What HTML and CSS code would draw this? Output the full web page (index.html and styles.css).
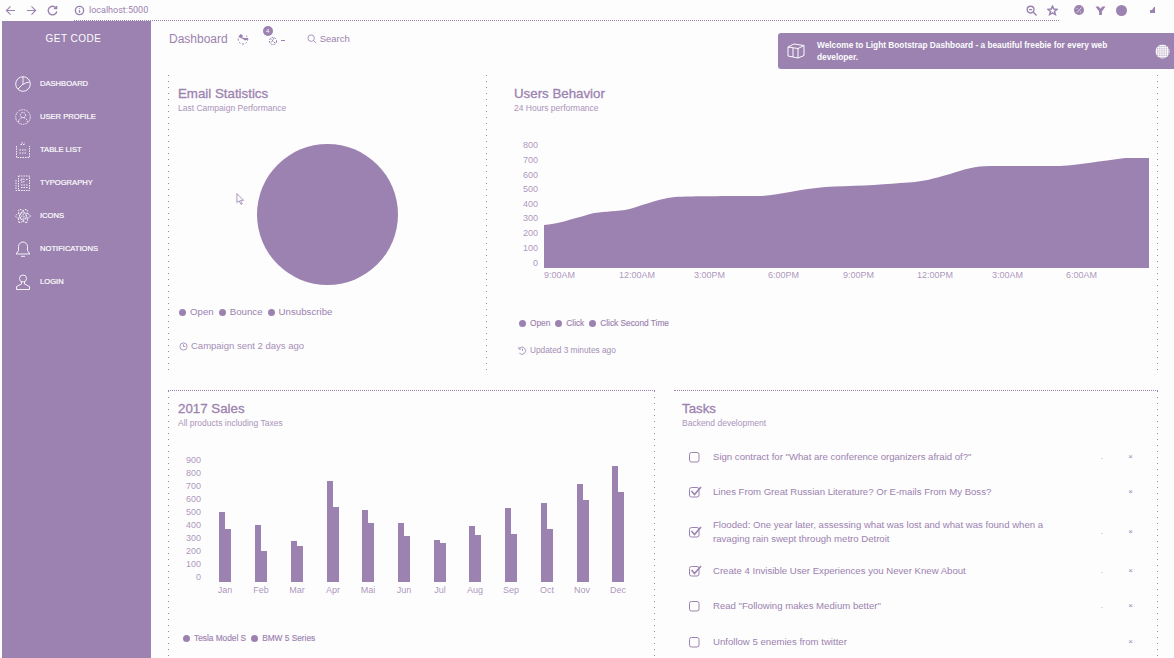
FILE: index.html
```html
<!DOCTYPE html>
<html lang="en">
<head>
    <meta charset="UTF-8">
    <title>Light Bootstrap Dashboard</title>
    <link rel="stylesheet" href="styles.css">
</head>
<body>
<svg class="defs" width="0" height="0">
    <symbol id="box-empty" viewBox="0 0 13 12"><rect x="0.5" y="1.5" width="9.5" height="9.5" rx="2" fill="none" stroke="currentColor"/></symbol>
    <symbol id="box-checked" viewBox="0 0 13 12"><rect x="0.5" y="1.5" width="9.5" height="9.5" rx="2" fill="none" stroke="currentColor"/><path d="M2.5 5l3 3.5L12 1" fill="none" stroke="currentColor" stroke-width="1.6"/></symbol>
</svg>

<div class="browser">
    <div class="browser-bar">
        <svg class="tool" viewBox="0 0 12 12"><path d="M11 6H1.5M6 1.5L1.5 6 6 10.5"/></svg>
        <svg class="tool" viewBox="0 0 12 12"><path d="M1 6h9.5M6 1.5L10.5 6 6 10.5"/></svg>
        <svg class="tool tool-thick" viewBox="0 0 12 12"><path d="M10 3.5A4.7 4.7 0 1 0 10.7 7M10.5 1v3h-3"/></svg>
        <svg class="tool tool-info tool-thick" viewBox="0 0 12 12"><circle cx="6" cy="6" r="4.5"/><path d="M6 5.5v3M6 3.2v1"/></svg>
        <span class="url">localhost:5000</span>
        <span class="browser-right">
            <svg class="tool tool-thick" viewBox="0 0 12 12"><circle cx="5" cy="5" r="3.7"/><path d="M3.3 5h3.4M8 8l3.5 3.5"/></svg>
            <svg class="tool tool-star" viewBox="0 0 12 12"><path d="M6 1.2l1.4 3.2 3.5.3-2.7 2.3.9 3.4L6 8.6l-3.1 1.8.9-3.4-2.7-2.3 3.500-.3z"/></svg>
            <svg class="ext-a" viewBox="0 0 10 10"><circle cx="5" cy="5" r="5"/><path class="ext-cut" d="M3 7.500L7.500 2.500M2.500 3.500h1M6 7h1"/></svg>
            <svg class="ext-v" viewBox="0 0 12 12"><path d="M.5 1.500h3.500L6 4l2-2.500h3.500L7.500 7v4h-3V7z"/></svg>
            <span class="ext-b"></span>
            <svg class="ext-tick" viewBox="0 0 5 6"><path d="M0 3h2l2-3h1v6H0z"/></svg>
        </span>
    </div>
    <div class="browser-rule"></div>
</div>

<div class="app">
    <aside class="sidebar">
        <div class="logo">GET CODE</div>
        <nav>
            <a class="nav-item">
                <svg class="nav-icon" viewBox="0 0 16 16"><circle cx="8" cy="8" r="7.3"/><path d="M8 .7V8L3 13M8 8.5l2.5-1.5 4 -1"/></svg>
                <span>Dashboard</span>
            </a>
            <a class="nav-item">
                <svg class="nav-icon nav-icon-dots" viewBox="0 0 16 16"><circle cx="8" cy="8" r="7.3"/><circle cx="8" cy="6" r="2.6"/><path d="M3.5 13c.5-3 2.5-4.500 4.500-4.500s4 1.500 4.500 4.500"/></svg>
                <span>User Profile</span>
            </a>
            <a class="nav-item">
                <svg class="nav-icon nav-icon-dots" viewBox="0 0 16 16"><path d="M5.500 2.500h5M6.500 1h3M1.500 4v11.500h13V4M4.500 8h7M4.500 11h7"/></svg>
                <span>Table List</span>
            </a>
            <a class="nav-item">
                <svg class="nav-icon nav-icon-dots" viewBox="0 0 16 16"><path d="M3.500 1h11v14.500h-11zM1 5v10.500h2.500M6 4h3v3H6zM11 4.500h1.500M6 10h6.500M6 12.500h6.500"/></svg>
                <span>Typography</span>
            </a>
            <a class="nav-item">
                <svg class="nav-icon nav-icon-dots" viewBox="0 0 16 16"><ellipse cx="8" cy="8" rx="7.300" ry="3"/><ellipse cx="8" cy="8" rx="7.300" ry="3" transform="rotate(60 8 8)"/><ellipse cx="8" cy="8" rx="7.300" ry="3" transform="rotate(120 8 8)"/><circle cx="8" cy="8" r="1.300"/></svg>
                <span>Icons</span>
            </a>
            <a class="nav-item">
                <svg class="nav-icon" viewBox="0 0 16 16"><path d="M8 1a4.500 4.500 0 0 0-4.500 4.500v4L1.200 13h13.600l-2.300-3.500v-4A4.500 4.500 0 0 0 8 1zM6 15.300h4"/></svg>
                <span>Notifications</span>
            </a>
            <a class="nav-item">
                <svg class="nav-icon" viewBox="0 0 16 16"><circle cx="8" cy="4.500" r="3.500"/><path d="M6.500 8v2L1.500 12.500v3h13v-3L9.500 10V8"/></svg>
                <span>Login</span>
            </a>
        </nav>
    </aside>

    <main class="main">
        <header class="navbar">
            <span class="brand">Dashboard</span>
            <svg class="nav-globe" viewBox="0 0 12 12"><path class="globe-ring" d="M3 2.500A4.800 4.800 0 1 0 9 2.500"/><path class="filled" d="M1.500 4L3.500 1l2.500 1.500-1 2 3 .5 3 0v1.500L8 7.500 6 6z"/></svg>
            <span class="nav-bell">
                <svg viewBox="0 0 14 14"><circle cx="9" cy="9" r="3.600"/><path d="M7.500 7.500l4 4M10 6l-3 5"/></svg>
                <i class="badge">4</i>
            </span>
            <i class="caret"></i>
            <svg class="nav-search" viewBox="0 0 12 12"><circle cx="5" cy="5" r="3.900"/><path d="M8 8l3 3"/></svg>
            <span class="search-label">Search</span>
        </header>

        <div class="alert">
            <svg class="alert-icon" viewBox="0 0 18 16"><path d="M1 4l6-3 10 1.500v10l-6 2.500-10-2zM1 4l10 1.500v9.500M11 5.500l6-3M6 5v9"/></svg>
            <span class="alert-text">Welcome to Light Bootstrap Dashboard - a beautiful freebie for every web developer.</span>
            <svg class="alert-close" viewBox="0 0 16 16">
                <defs><pattern id="speck" width="2" height="2" patternUnits="userSpaceOnUse"><rect width="2" height="2" fill="#fdfdfd"/><rect width="1" height="1" fill="#9c82b0"/></pattern></defs>
                <circle cx="8" cy="8" r="7.500" fill="url(#speck)"/>
            </svg>
        </div>

        <section class="row row-top">
            <div class="card card-email">
                <h4 class="card-title">Email Statistics</h4>
                <p class="card-sub">Last Campaign Performance</p>
                <svg class="chart-pie" viewBox="178 130 300 160"><circle cx="327.500" cy="214.500" r="70.500"/></svg>
                <div class="legend legend-email">
                    <span><i class="dot"></i>Open</span>
                    <span><i class="dot"></i>Bounce</span>
                    <span><i class="dot"></i>Unsubscribe</span>
                </div>
                <div class="stats stats-email">
                    <svg viewBox="0 0 10 10"><circle cx="5" cy="5" r="4"/><path d="M5 2.500V5h2"/></svg>
                    Campaign sent 2 days ago
                </div>
            </div>
            <div class="card card-users">
                <h4 class="card-title">Users Behavior</h4>
                <p class="card-sub">24 Hours performance</p>
                <svg class="chart-area" viewBox="514 130 638 155">
                    <path d="M544 268V225C556 224 570 220 590 214C602 211 612 212 625 210C640 207 655 199 675 197C690 196 740 196 760 196C780 195 800 189 825 187C850 186 880 185 900 183C925 182 935 178 950 174C965 169 975 166 990 166H1060C1080 165 1100 161 1125 158H1149V268Z"/>
                    <g class="y-labels">
                        <text x="538" y="148">800</text><text x="538" y="163">700</text><text x="538" y="178">600</text>
                        <text x="538" y="192">500</text><text x="538" y="207">400</text><text x="538" y="221">300</text>
                        <text x="538" y="236">200</text><text x="538" y="251">100</text><text x="538" y="266">0</text>
                    </g>
                    <g class="x-labels x-labels-start">
                        <text x="544" y="278">9:00AM</text><text x="619" y="278">12:00AM</text><text x="694" y="278">3:00PM</text>
                        <text x="768" y="278">6:00PM</text><text x="843" y="278">9:00PM</text><text x="917" y="278">12:00PM</text>
                        <text x="992" y="278">3:00AM</text><text x="1066" y="278">6:00AM</text>
                    </g>
                </svg>
                <div class="legend legend-users">
                    <span><i class="dot"></i>Open</span>
                    <span><i class="dot"></i>Click</span>
                    <span><i class="dot"></i>Click Second Time</span>
                </div>
                <div class="stats stats-users">
                    <svg viewBox="0 0 10 10"><path d="M1.500 2.500A4 4 0 1 1 1.500 8M1 1v2.500h2.500M5 3v2.500"/></svg>
                    Updated 3 minutes ago
                </div>
            </div>
        </section>

        <section class="row row-bottom">
            <div class="card card-sales">
                <h4 class="card-title">2017 Sales</h4>
                <p class="card-sub">All products including Taxes</p>
                <svg class="chart-bars" viewBox="170 450 480 150">
                    <path d="M219 582V512h6v70zM225 582V529h6v53zM255 582V525h6v57zM261 582V551h6v31zM291 582V541h6v41zM297 582V546h6v36zM327 582V481h6v101zM333 582V507h6v75zM362 582V510h6v72zM368 582V523h6v59zM398 582V523h6v59zM404 582V536h6v46zM434 582V540h6v42zM440 582V543h6v39zM469 582V526h6v56zM475 582V535h6v47zM505 582V508h6v74zM511 582V534h6v48zM541 582V503h6v79zM547 582V529h6v53zM577 582V484h6v98zM583 582V500h6v82zM612 582V466h6v116zM618 582V492h6v90z"/>
                    <g class="y-labels">
                        <text x="201" y="463">900</text><text x="201" y="476">800</text><text x="201" y="489">700</text>
                        <text x="201" y="502">600</text><text x="201" y="515">500</text><text x="201" y="528">400</text>
                        <text x="201" y="541">300</text><text x="201" y="554">200</text><text x="201" y="567">100</text><text x="201" y="580">0</text>
                    </g>
                    <g class="x-labels">
                        <text x="225" y="593">Jan</text><text x="261" y="593">Feb</text><text x="297" y="593">Mar</text>
                        <text x="333" y="593">Apr</text><text x="368" y="593">Mai</text><text x="404" y="593">Jun</text>
                        <text x="440" y="593">Jul</text><text x="475" y="593">Aug</text><text x="511" y="593">Sep</text>
                        <text x="547" y="593">Oct</text><text x="582" y="593">Nov</text><text x="618" y="593">Dec</text>
                    </g>
                </svg>
                <div class="legend legend-sales">
                    <span><i class="dot"></i>Tesla Model S</span>
                    <span><i class="dot"></i>BMW 5 Series</span>
                </div>
            </div>
            <div class="card card-tasks">
                <h4 class="card-title">Tasks</h4>
                <p class="card-sub">Backend development</p>
                <ul class="tasks">
                    <li><svg class="check"><use href="#box-empty"/></svg><span>Sign contract for "What are conference organizers afraid of?"</span><i class="edit">.</i><i class="remove">×</i></li>
                    <li><svg class="check"><use href="#box-checked"/></svg><span>Lines From Great Russian Literature? Or E-mails From My Boss?</span><i class="edit"></i><i class="remove">×</i></li>
                    <li><svg class="check"><use href="#box-checked"/></svg><span>Flooded: One year later, assessing what was lost and what was found when a ravaging rain swept through metro Detroit</span><i class="edit">.</i><i class="remove">×</i></li>
                    <li><svg class="check"><use href="#box-checked"/></svg><span>Create 4 Invisible User Experiences you Never Knew About</span><i class="edit">.</i><i class="remove">×</i></li>
                    <li><svg class="check"><use href="#box-empty"/></svg><span>Read "Following makes Medium better"</span><i class="edit">.</i><i class="remove">×</i></li>
                    <li><svg class="check"><use href="#box-empty"/></svg><span>Unfollow 5 enemies from twitter</span><i class="edit"></i><i class="remove">×</i></li>
                </ul>
            </div>
        </section>

        <svg class="cursor" viewBox="0 0 10 14"><path d="M1 1v10l2.500-2 2 4 1.500-.7-2-3.800h3.500z"/></svg>
    </main>
</div>
</body>
</html>
```

FILE: styles.css
```css
html, body {
    margin: 0;
    height: 658px;
    overflow: hidden;
}
body {
    background-color: #fdfdfd;
    color: #9c82b0;
    font-family: "Liberation Sans", Arial, sans-serif;
}
.defs {
    display: block;
    height: 0;
}

/* browser chrome */
.browser-bar {
    height: 20px;
    display: flex;
    align-items: center;
    padding: 0 19px 0 5px;
    font-family: Roboto, sans-serif;
}
.tool {
    width: 11px;
    height: 11px;
    margin-right: 10px;
    fill: none;
    stroke: #9c82b0;
    stroke-width: 1.2;
}
.tool-thick {
    stroke-width: 1.5;
}
.tool-info {
    margin-left: 6px;
    margin-right: 4px;
}
.url {
    font-size: 9px;
}
.browser-right {
    margin-left: auto;
    display: flex;
    align-items: center;
}
.tool-star {
    margin-right: 16px;
    stroke-width: 1.6;
}
.ext-a {
    width: 10px;
    height: 10px;
    margin-right: 11px;
    fill: #9c82b0;
}
.ext-cut {
    fill: none;
    stroke: #fdfdfd;
    stroke-width: 0.7;
}
.ext-v {
    width: 11px;
    height: 11px;
    fill: #9c82b0;
    margin-right: 10px;
}
.ext-b {
    width: 11px;
    height: 11px;
    margin-right: 23px;
    border-radius: 50%;
    background-color: #9c82b0;
}
.ext-tick {
    width: 5px;
    height: 6px;
    fill: #9c82b0;
}
.browser-rule {
    margin: 0 115px 0 74px;
    border-top: 1px dotted #9c82b0;
}

/* layout */
.app {
    display: flex;
    height: 637px;
    padding-left: 2px;
    overflow: hidden;
}
.sidebar {
    width: 149px;
    flex-shrink: 0;
    background-color: #9c82b0;
    color: #fdfdfd;
}
.logo {
    height: 46px;
    padding-right: 6px;
    line-height: 36px;
    text-align: center;
    font-size: 10px;
    letter-spacing: 0.5px;
}
.nav-item {
    height: 33px;
    display: flex;
    align-items: center;
    padding-left: 13px;
    font-size: 7.6px;
    text-transform: uppercase;
    -webkit-text-stroke: 0.2px #fdfdfd;
}
.nav-icon {
    width: 16px;
    height: 16px;
    margin-right: 9px;
    fill: none;
    stroke: #fdfdfd;
    stroke-width: 0.9;
}
.nav-icon-dots {
    stroke-dasharray: 1.5 1;
}
.main {
    flex: 1;
    position: relative;
    padding: 0 16px 0 17px;
    min-width: 0;
    overflow: hidden;
}

/* top navbar */
.navbar {
    height: 54px;
    display: flex;
    align-items: center;
    padding-bottom: 19px;
    box-sizing: border-box;
    padding-left: 1px;
}
.brand {
    font-size: 12px;
}
.nav-globe {
    width: 12px;
    height: 12px;
    margin-left: 9px;
    fill: none;
    stroke: #9c82b0;
}
.globe-ring {
    stroke-dasharray: 2 1.5;
}
.nav-globe .filled {
    fill: #9c82b0;
    stroke: none;
}
.nav-bell {
    position: relative;
    margin-left: 15px;
    width: 14px;
    height: 14px;
}
.nav-bell svg {
    display: block;
    fill: none;
    stroke: #9c82b0;
    stroke-dasharray: 2 1;
}
.badge {
    position: absolute;
    left: -1px;
    top: -6px;
    width: 10px;
    height: 10px;
    line-height: 10px;
    border-radius: 50%;
    background-color: #9c82b0;
    color: #fdfdfd;
    font-size: 6px;
    font-style: normal;
    text-align: center;
}
.caret {
    width: 4px;
    height: 1px;
    margin: 3px 0 0 3px;
    background-color: #9c82b0;
}
.nav-search {
    width: 10px;
    height: 10px;
    margin-left: 22px;
    fill: none;
    stroke: #9c82b0;
}
.search-label {
    margin-left: 3px;
    font-size: 9.5px;
}

/* notification over the page */
.alert {
    position: absolute;
    top: 12px;
    right: 0;
    width: 396px;
    height: 36px;
    box-sizing: border-box;
    display: flex;
    align-items: center;
    padding: 0 4px 0 9px;
    background-color: #9c82b0;
    color: #fdfdfd;
    border-radius: 3px 0 0 3px;
}
.alert-icon {
    width: 18px;
    height: 16px;
    flex-shrink: 0;
    fill: none;
    stroke: #fdfdfd;
}
.alert-text {
    width: 300px;
    margin-left: 12px;
    font-size: 8.3px;
    font-weight: bold;
    line-height: 12px;
}
.alert-close {
    width: 15px;
    height: 15px;
    margin-left: auto;
}

/* mouse pointer caught in the shot */
.cursor {
    position: absolute;
    left: 85px;
    top: 171px;
    width: 9px;
    height: 14px;
    fill: #fdfdfd;
    stroke: #9c82b0;
    stroke-width: 0.9;
}

/* cards */
.row {
    display: grid;
}
.row-top {
    grid-template-columns: 318px 1fr;
    height: 297px;
    margin-bottom: 18px;
}
.row-bottom {
    grid-template-columns: 487px 484px;
    column-gap: 19px;
    height: 268px;
}
.card {
    padding: 10px 0 0 10px;
    box-sizing: border-box;
    overflow: hidden;
    --side-dots: repeating-linear-gradient(#9c82b0 0 1px, transparent 1px 6px);
    background-repeat: no-repeat;
    background-size: 1px 100%;
}
.card-email {
    background-image: var(--side-dots);
    background-position: left top;
}
.card-users {
    background-image: var(--side-dots), var(--side-dots);
    background-position: left top, right top;
    padding-left: 28px;
}
.card-sales {
    border-top: 1px dotted #9c82b0;
    background-image: var(--side-dots), var(--side-dots);
    background-position: left top, right top;
    padding-top: 9px;
}
.card-tasks {
    border-top: 1px dotted #9c82b0;
    background-image: var(--side-dots);
    background-position: right top;
    padding: 9px 0 0 8px;
}
.card-title {
    margin: 0;
    font-size: 13.3px;
    font-weight: normal;
    line-height: 17px;
    -webkit-text-stroke: 0.3px #9c82b0;
}
.card-sub {
    margin: 0;
    font-size: 8.5px;
    line-height: 12px;
    height: 12px;
    opacity: 0.85;
}

/* charts */
.chart-pie, .chart-area, .chart-bars {
    display: block;
    fill: #9c82b0;
}
.chart-pie {
    width: 300px;
    height: 160px;
    margin-top: 16px;
}
.chart-area {
    width: 638px;
    height: 155px;
    margin-top: 16px;
}
.chart-bars {
    width: 480px;
    height: 150px;
    margin: 21px 0 0 -8px;
}
.y-labels text, .x-labels text {
    font-size: 9px;
    fill-opacity: 0.85;
}
.y-labels text {
    text-anchor: end;
}
.x-labels text {
    text-anchor: middle;
}
.x-labels-start text {
    text-anchor: start;
}

/* legends and footers */
.legend {
    display: flex;
    line-height: 14px;
}
.legend span {
    display: flex;
    align-items: center;
}
.dot {
    width: 7px;
    height: 7px;
    margin-right: 4px;
    border-radius: 50%;
    background-color: #9c82b0;
}
.legend-email {
    margin: 15px 0 0 1px;
    gap: 5px;
    font-size: 9.7px;
}
.legend-users {
    margin: 31px 0 0 5px;
    gap: 5px;
    font-size: 8.3px;
    -webkit-text-stroke: 0.15px #9c82b0;
}
.legend-sales {
    margin: 31px 0 0 5px;
    gap: 5px;
    font-size: 8.3px;
    -webkit-text-stroke: 0.15px #9c82b0;
}
.stats {
    display: flex;
    align-items: center;
    line-height: 14px;
    opacity: 0.9;
}
.stats svg {
    width: 9px;
    height: 9px;
    margin-right: 3px;
    fill: none;
    stroke: #9c82b0;
}
.stats-email {
    margin: 20px 0 0 1px;
    font-size: 9.5px;
}
.stats-users {
    margin: 13px 0 0 4px;
    font-size: 8.3px;
}

/* task list */
.tasks {
    list-style: none;
    margin: 10px 0 0;
    padding: 0 0 0 7px;
    font-size: 9.6px;
    line-height: 14px;
}
.tasks li {
    display: grid;
    grid-template-columns: 24px 332px 58px 30px;
    align-items: center;
    min-height: 35.5px;
    padding: 7.5px 0;
    box-sizing: border-box;
}
.check {
    width: 13px;
    height: 12px;
    color: #9c82b0;
}
.edit, .remove {
    font-style: normal;
    font-size: 8px;
    text-align: right;
}
```
